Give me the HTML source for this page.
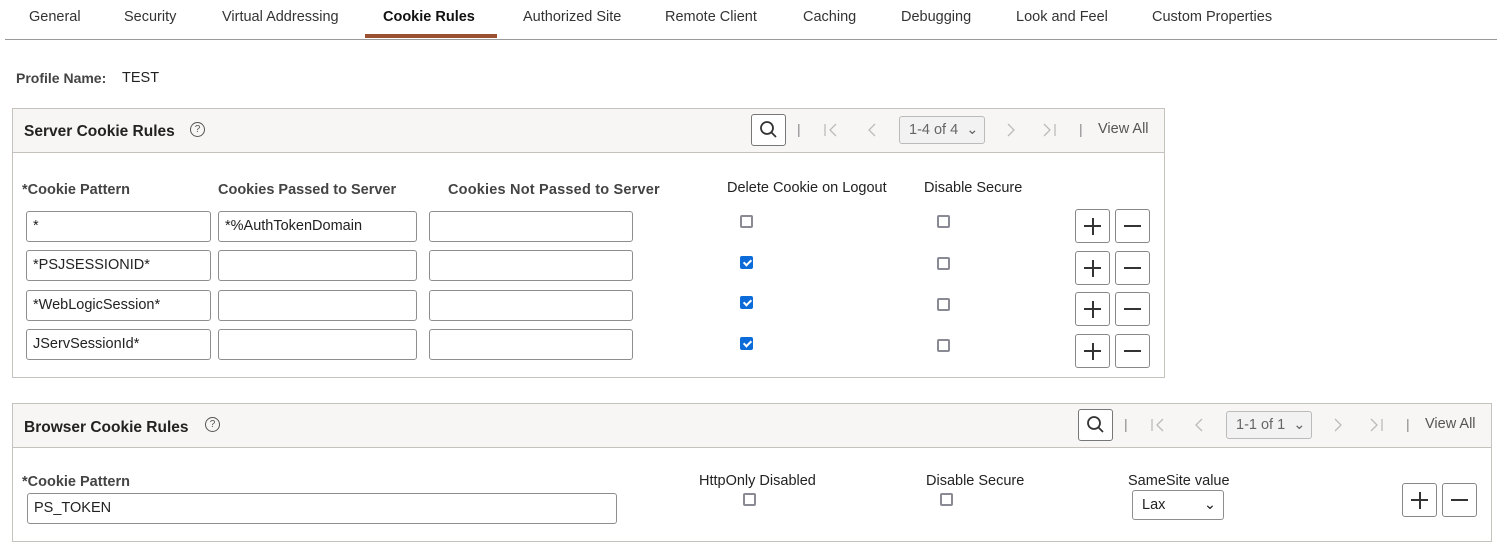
<!DOCTYPE html>
<html><head><meta charset="utf-8"><style>
*{box-sizing:border-box;margin:0;padding:0}
body{width:1497px;height:547px;background:#fff;font-family:"Liberation Sans",Arial,sans-serif;color:#222;font-size:14px;position:relative;overflow:hidden}
.a{position:absolute;white-space:nowrap}
.tab{top:9px;font-size:14.5px;color:#333}
.inp{position:absolute;border:1px solid #8e8e8e;border-radius:3px;background:#fff;height:31px;padding:0 6px;line-height:29px;font-size:14.5px;color:#222}
.cb{position:absolute;width:13px;height:13px;border:2px solid #8a8a94;border-radius:2px;background:#fff}
.cb.on{background:#0b6bd8;border-color:#0b6bd8}
.cb.on:after{content:"";position:absolute;left:3px;top:0px;width:3px;height:6px;border:solid #fff;border-width:0 2px 2px 0;transform:rotate(45deg)}
.btn{position:absolute;width:35px;height:34px;border:1px solid #888;border-radius:3px;background:#fff}
.plus:before,.plus:after,.minus:before{content:"";position:absolute;background:#333}
.plus:before,.minus:before{left:8px;top:15px;width:17px;height:2px}
.plus:after{left:15.5px;top:8px;width:2px;height:17px}
.box{position:absolute;border:1px solid #c6c3be}
.hdr{position:absolute;left:0;top:0;right:0;height:44px;background:#f7f6f4;border-bottom:1px solid #c6c3be}
.ttl{font-weight:bold;font-size:15.5px;color:#222}
.help{position:absolute;width:15px;height:15px;border:1px solid #555;border-radius:50%;font-size:10px;text-align:center;line-height:13px;color:#555}
.lbl{font-weight:bold;color:#444;font-size:14.5px}
.sep{color:#888;font-size:14px}
.srch{position:absolute;width:35px;height:32px;border:1px solid #777;border-radius:3px;background:#fff}
.sel{position:absolute;border:1px solid #bbb;border-radius:3px;background:#f2f2f2;height:28px;color:#666;font-size:14.5px;line-height:26px;padding-left:9px}
.va{color:#555;font-size:14.5px}
.ic{position:absolute}
</style></head><body>
<div class="a tab" style="left:29px">General</div>
<div class="a tab" style="left:124px">Security</div>
<div class="a tab" style="left:222px">Virtual Addressing</div>
<div class="a tab" style="left:383px;font-weight:bold;color:#111">Cookie Rules</div>
<div class="a tab" style="left:523px">Authorized Site</div>
<div class="a tab" style="left:665px">Remote Client</div>
<div class="a tab" style="left:803px">Caching</div>
<div class="a tab" style="left:901px">Debugging</div>
<div class="a tab" style="left:1016px">Look and Feel</div>
<div class="a tab" style="left:1152px">Custom Properties</div>
<div class="a" style="left:365px;top:34px;width:132px;height:4px;background:#9a5132"></div>
<div class="a" style="left:5px;top:39px;width:1492px;height:1px;background:#999"></div>
<div class="a lbl" style="left:16px;top:70px;font-size:14px">Profile Name:</div>
<div class="a" style="left:122px;top:70px;font-size:14.5px">TEST</div>

<div class="box" style="left:12px;top:108px;width:1153px;height:270px">
 <div class="hdr"></div>
 <div class="a ttl" style="left:11px;top:14px">Server Cookie Rules</div>
 <div class="help" style="left:177px;top:13px">?</div>
 <div class="srch" style="left:738px;top:5px"><svg width="33" height="30"><circle cx="15" cy="13" r="6" fill="none" stroke="#333" stroke-width="1.8"/><line x1="19.5" y1="17.5" x2="24" y2="22" stroke="#333" stroke-width="1.8"/></svg></div>
 <div class="a sep" style="left:784px;top:12px">|</div>
 <svg class="ic" style="left:810px;top:13px" width="16" height="16"><path d="M2 2v12M13 2l-6 6 6 6" fill="none" stroke="#bbb" stroke-width="1.3"/></svg>
 <svg class="ic" style="left:853px;top:13px" width="12" height="16"><path d="M9 2l-6 6 6 6" fill="none" stroke="#bbb" stroke-width="1.3"/></svg>
 <div class="sel" style="left:886px;top:7px;width:86px">1-4 of 4 &nbsp;⌄</div>
 <svg class="ic" style="left:992px;top:13px" width="12" height="16"><path d="M3 2l6 6-6 6" fill="none" stroke="#bbb" stroke-width="1.3"/></svg>
 <svg class="ic" style="left:1029px;top:13px" width="16" height="16"><path d="M2 2l6 6-6 6M13 2v12" fill="none" stroke="#bbb" stroke-width="1.3"/></svg>
 <div class="a sep" style="left:1066px;top:12px">|</div>
 <div class="a va" style="left:1085px;top:12px">View All</div>
 <div class="a lbl" style="left:9px;top:73px">*Cookie Pattern</div>
 <div class="a lbl" style="left:205px;top:73px">Cookies Passed to Server</div>
 <div class="a lbl" style="left:435px;top:73px;letter-spacing:0.2px">Cookies Not Passed to Server</div>
 <div class="a" style="left:714px;top:71px;font-size:14.5px">Delete Cookie on Logout</div>
 <div class="a" style="left:911px;top:71px;font-size:14.5px">Disable Secure</div>
</div>
<div class="inp" style="left:26px;top:211px;width:185px">*</div>
<div class="inp" style="left:218px;top:211px;width:199px">*%AuthTokenDomain</div>
<div class="inp" style="left:429px;top:211px;width:204px"></div>
<div class="inp" style="left:26px;top:250px;width:185px">*PSJSESSIONID*</div>
<div class="inp" style="left:218px;top:250px;width:199px"></div>
<div class="inp" style="left:429px;top:250px;width:204px"></div>
<div class="inp" style="left:26px;top:290px;width:185px">*WebLogicSession*</div>
<div class="inp" style="left:218px;top:290px;width:199px"></div>
<div class="inp" style="left:429px;top:290px;width:204px"></div>
<div class="inp" style="left:26px;top:329px;width:185px">JServSessionId*</div>
<div class="inp" style="left:218px;top:329px;width:199px"></div>
<div class="inp" style="left:429px;top:329px;width:204px"></div>
<div class="cb" style="left:740px;top:215px"></div><div class="cb" style="left:937px;top:215px"></div>
<div class="cb on" style="left:740px;top:256px"></div><div class="cb" style="left:937px;top:257px"></div>
<div class="cb on" style="left:740px;top:296px"></div><div class="cb" style="left:937px;top:298px"></div>
<div class="cb on" style="left:740px;top:337px"></div><div class="cb" style="left:937px;top:339px"></div>
<div class="btn plus" style="left:1075px;top:209px"></div><div class="btn minus" style="left:1115px;top:209px"></div>
<div class="btn plus" style="left:1075px;top:251px"></div><div class="btn minus" style="left:1115px;top:251px"></div>
<div class="btn plus" style="left:1075px;top:292px"></div><div class="btn minus" style="left:1115px;top:292px"></div>
<div class="btn plus" style="left:1075px;top:334px"></div><div class="btn minus" style="left:1115px;top:334px"></div>

<div class="box" style="left:12px;top:403px;width:1480px;height:139px">
 <div class="hdr"></div>
 <div class="a ttl" style="left:11px;top:15px">Browser Cookie Rules</div>
 <div class="help" style="left:192px;top:13px">?</div>
 <div class="srch" style="left:1065px;top:5px"><svg width="33" height="30"><circle cx="15" cy="13" r="6" fill="none" stroke="#333" stroke-width="1.8"/><line x1="19.5" y1="17.5" x2="24" y2="22" stroke="#333" stroke-width="1.8"/></svg></div>
 <div class="a sep" style="left:1111px;top:12px">|</div>
 <svg class="ic" style="left:1137px;top:13px" width="16" height="16"><path d="M2 2v12M13 2l-6 6 6 6" fill="none" stroke="#bbb" stroke-width="1.3"/></svg>
 <svg class="ic" style="left:1180px;top:13px" width="12" height="16"><path d="M9 2l-6 6 6 6" fill="none" stroke="#bbb" stroke-width="1.3"/></svg>
 <div class="sel" style="left:1213px;top:7px;width:86px">1-1 of 1 &nbsp;⌄</div>
 <svg class="ic" style="left:1319px;top:13px" width="12" height="16"><path d="M3 2l6 6-6 6" fill="none" stroke="#bbb" stroke-width="1.3"/></svg>
 <svg class="ic" style="left:1356px;top:13px" width="16" height="16"><path d="M2 2l6 6-6 6M13 2v12" fill="none" stroke="#bbb" stroke-width="1.3"/></svg>
 <div class="a sep" style="left:1393px;top:12px">|</div>
 <div class="a va" style="left:1412px;top:12px">View All</div>
 <div class="a lbl" style="left:9px;top:70px">*Cookie Pattern</div>
 <div class="a" style="left:686px;top:69px;font-size:14.5px">HttpOnly Disabled</div>
 <div class="a" style="left:913px;top:69px;font-size:14.5px">Disable Secure</div>
 <div class="a" style="left:1115px;top:69px;font-size:14.5px">SameSite value</div>
</div>
<div class="inp" style="left:27px;top:493px;width:590px">PS_TOKEN</div>
<div class="cb" style="left:743px;top:493px"></div><div class="cb" style="left:940px;top:493px"></div>
<div class="inp" style="left:1132px;top:490px;width:92px;height:30px;line-height:28px;padding-left:9px">Lax<span style="position:absolute;right:7px;top:0">⌄</span></div>
<div class="btn plus" style="left:1402px;top:483px"></div><div class="btn minus" style="left:1442px;top:483px"></div>
</body></html>
